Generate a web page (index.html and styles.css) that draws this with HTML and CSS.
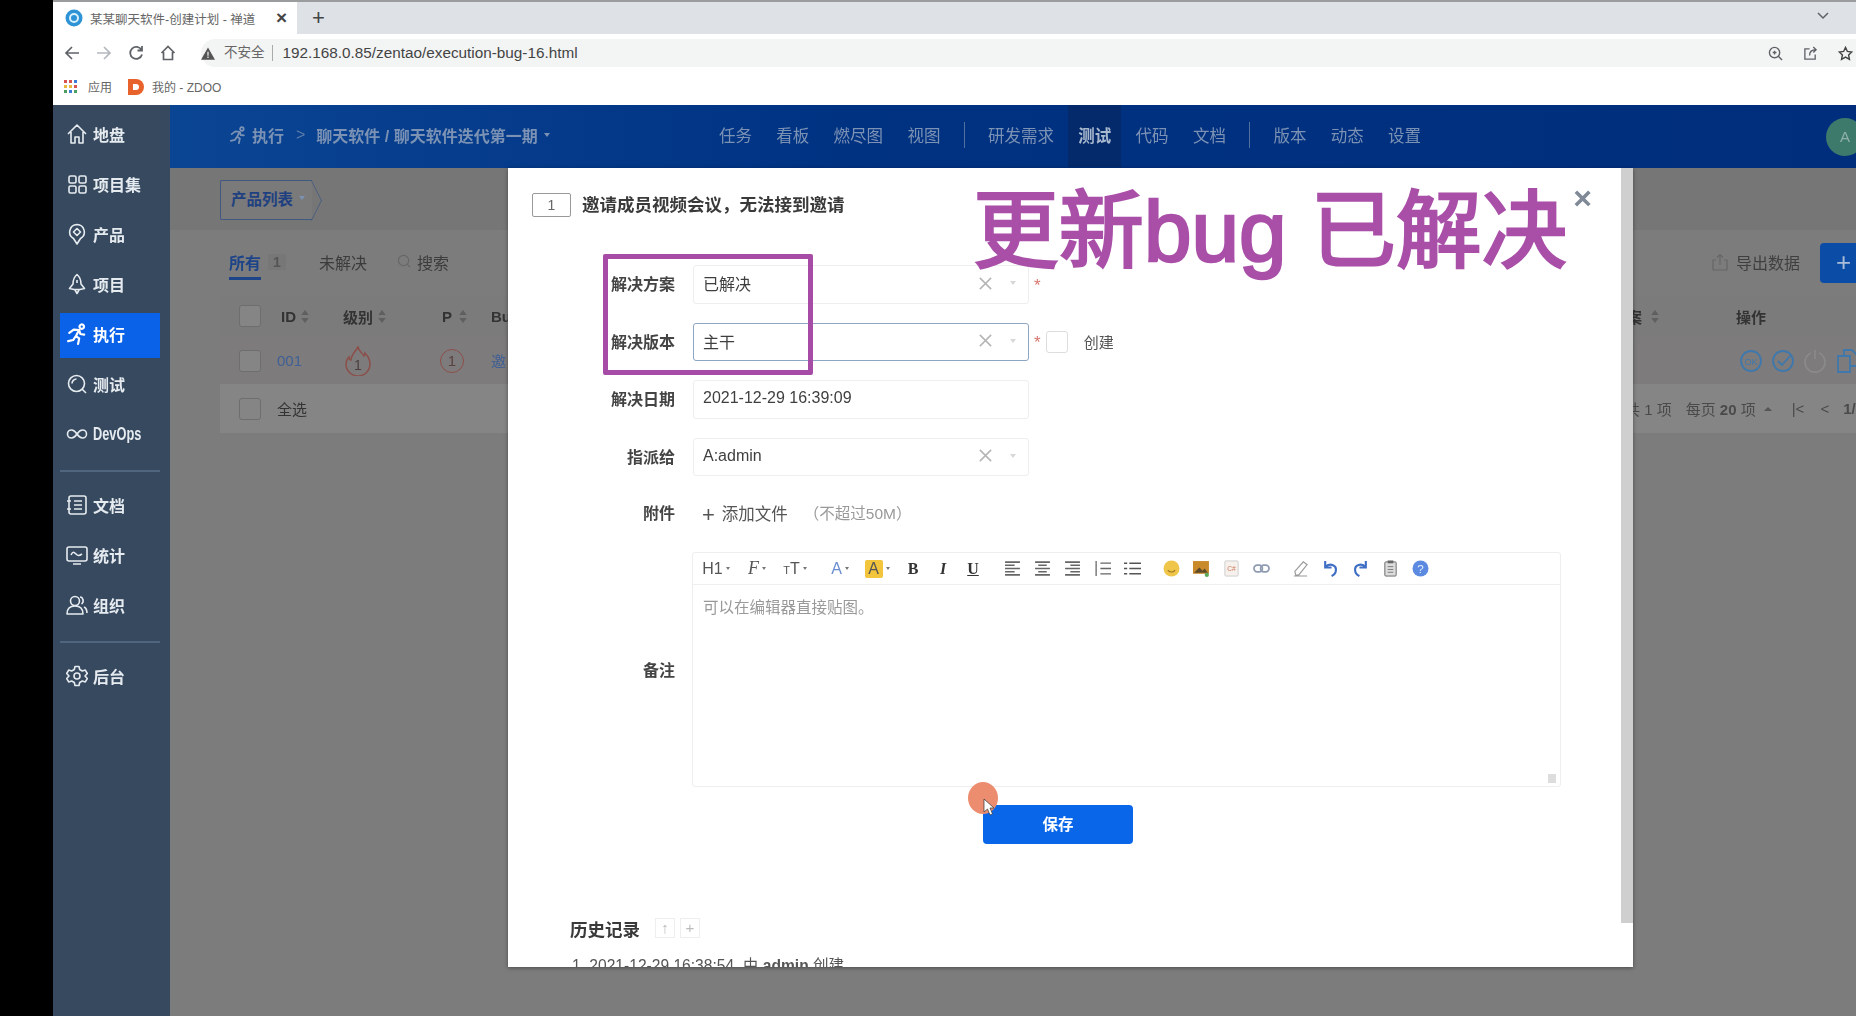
FILE: index.html
```html
<!DOCTYPE html>
<html lang="zh-CN">

<head>
    <meta charset="UTF-8">
    <title>某某聊天软件-创建计划 - 禅道</title>
    <link rel="stylesheet" href="styles.css">
</head>

<body>
    <svg class="defs" width="0" height="0">
        <symbol id="sort" viewBox="0 0 10 16"><path d="M5 1l4 5.500H1zM5 15l4-5.500H1z" fill="currentColor"/></symbol>
        <symbol id="clear" viewBox="0 0 16 16"><path d="M2 2l12 12M14 2L2 14" stroke="currentColor" stroke-width="1.600" fill="none"/></symbol>
        <symbol id="run" viewBox="0 0 20 20"><path d="M12.500 2.500a2 2 0 1 1 3 2.400 2 2 0 0 1-3-2.400zM3 9l4-3 5 .5 1 3.500 3.500 .5M11 8l-2 4 3 2-1 5M8.500 12.500L6.500 15.500 2 16.500" stroke="currentColor" stroke-width="2" fill="none" stroke-linecap="round" stroke-linejoin="round"/></symbol>
    </svg>

    <div class="desktop">
        <div class="browser">
            <div class="tabstrip">
                <div class="tab">
                    <svg class="favicon" viewBox="0 0 18 18"><circle cx="9" cy="9" r="8.500" fill="#2d93d6"/><circle cx="9" cy="9" r="4" fill="none" stroke="#d8f0fb" stroke-width="2"/></svg>
                    <span class="tab-title">某某聊天软件-创建计划 - 禅道</span>
                    <span class="tab-close">×</span>
                </div>
                <span class="tab-new">+</span>
                <svg class="tab-list" viewBox="0 0 12 8"><path d="M1 1l5 5 5-5" stroke="#5f6368" stroke-width="1.500" fill="none"/></svg>
            </div>

            <div class="addressbar">
                <svg class="tool" viewBox="0 0 16 16"><path d="M15 8H2M8 2L2 8l6 6" stroke="#5f6368" stroke-width="1.700" fill="none"/></svg>
                <svg class="tool" viewBox="0 0 16 16"><path d="M1 8h13M8 2l6 6-6 6" stroke="#b4b8bd" stroke-width="1.700" fill="none"/></svg>
                <svg class="tool" viewBox="0 0 16 16"><path d="M13.500 5A6 6 0 1 0 14 9.500M14 1v4.500H9.500" stroke="#5f6368" stroke-width="1.800" fill="none"/></svg>
                <svg class="tool" viewBox="0 0 16 16"><path d="M1.500 8L8 1.500 14.500 8M3.500 7v7.500h9V7" stroke="#5f6368" stroke-width="1.700" fill="none"/></svg>
                <div class="omnibox">
                    <svg class="warn" viewBox="0 0 16 14"><path d="M8 0l8 14H0z" fill="#555"/><path d="M8 5v4.500M8 10.500v1.500" stroke="#f1f3f4" stroke-width="1.400"/></svg>
                    <span class="unsafe">不安全</span>
                    <span class="url">192.168.0.85/zentao/execution-bug-16.html</span>
                    <svg class="omni-icon omni-zoom" viewBox="0 0 16 16"><circle cx="7" cy="7" r="5.500" fill="none" stroke="#5f6368" stroke-width="1.500"/><path d="M11 11l4 4M5 7h4M7 5v4" stroke="#5f6368" stroke-width="1.500"/></svg>
                    <svg class="omni-icon" viewBox="0 0 16 16"><path d="M7 3H2v11h11V9M7 10c0-4 3-6 7-6M11 1l3 3-3 3" stroke="#5f6368" stroke-width="1.400" fill="none"/></svg>
                    <svg class="omni-icon" viewBox="0 0 16 16"><path d="M8 1.500l2 4.300 4.700 .6-3.400 3.200 .9 4.600L8 11.900l-4.200 2.300 .9-4.600L1.300 6.400 6 5.800z" stroke="#444" stroke-width="1.500" fill="none"/></svg>
                </div>
            </div>

            <div class="bookmarks">
                <svg class="apps" viewBox="0 0 14 14">
                    <g fill="#d9534f"><rect width="3" height="3"/><rect x="5" width="3" height="3"/></g>
                    <rect x="10" width="3" height="3" fill="#3d7bd9"/>
                    <g fill="#e8b93c"><rect y="5" width="3" height="3"/><rect x="5" y="5" width="3" height="3"/></g>
                    <rect x="10" y="5" width="3" height="3" fill="#d9534f"/>
                    <g fill="#4b9e5f"><rect y="10" width="3" height="3"/><rect x="10" y="10" width="3" height="3"/></g>
                    <rect x="5" y="10" width="3" height="3" fill="#3d7bd9"/>
                </svg>
                <span>应用</span>
                <svg class="zdoo" viewBox="0 0 16 16"><path d="M0 0h8a8 8 0 0 1 0 16H0z" fill="#e8622c"/><path d="M5 5h3a3 3 0 0 1 0 6H5z" fill="#fff"/></svg>
                <span>我的 - ZDOO</span>
            </div>

            <div class="zentao">
                <nav class="sidebar">
                    <a class="side-item">
                        <svg viewBox="0 0 22 22"><path d="M2 11L11 2l9 9M5 9v11h4v-6h4v6h4V9"/></svg>地盘
                    </a>
                    <a class="side-item">
                        <svg viewBox="0 0 22 22"><rect x="3" y="3" width="7" height="7" rx="1.500"/><rect x="13" y="3" width="7" height="7" rx="1.500"/><rect x="3" y="13" width="7" height="7" rx="1.500"/><rect x="13" y="13" width="7" height="7" rx="1.500"/></svg>项目集
                    </a>
                    <a class="side-item">
                        <svg viewBox="0 0 22 22"><path d="M11 1.500a7.500 7.500 0 0 0-3.500 14L11 21l3.500-5.500a7.500 7.500 0 0 0-3.500-14zM11 5.500l3.500 3.500-3.500 3.500L7.500 9z"/></svg>产品
                    </a>
                    <a class="side-item">
                        <svg viewBox="0 0 22 22"><path d="M11 1.500c3 2.500 4 6 4 9.500l3.500 4.500-4.500 1H8l-4.500-1L7 11c0-3.500 1-7 4-9.500zM9 17l2 3.500 2-3.500M11 7v3"/></svg>项目
                    </a>
                    <a class="side-item active">
                        <svg viewBox="0 0 20 20"><use href="#run"/></svg>执行
                    </a>
                    <a class="side-item">
                        <svg viewBox="0 0 22 22"><circle cx="10.500" cy="10.500" r="8"/><path d="M16 16l4 4M6 10.500a4.500 4.500 0 0 1 4.500-4.500"/></svg>测试
                    </a>
                    <a class="side-item">
                        <svg viewBox="0 0 22 22"><path d="M11 11c-2-3-3.500-4-5.500-4a4 4 0 0 0 0 8c2 0 3.500-1 5.500-4s3.500-4 5.500-4a4 4 0 0 1 0 8c-2 0-3.500-1-5.500-4z"/></svg><span class="side-narrow">DevOps</span>
                    </a>
                    <div class="side-line"></div>
                    <a class="side-item">
                        <svg viewBox="0 0 22 22"><rect x="3" y="2" width="17" height="18" rx="2"/><path d="M8 7h8M8 11h8M8 15h8M1 7h4M1 15h4"/></svg>文档
                    </a>
                    <a class="side-item">
                        <svg viewBox="0 0 22 22"><rect x="1" y="3" width="20" height="14" rx="2"/><path d="M7 20h8M5 11c2-4 3-3 5-1s3 2 6 0"/></svg>统计
                    </a>
                    <a class="side-item">
                        <svg viewBox="0 0 22 22"><circle cx="9" cy="7" r="4.500"/><path d="M1 20c0-5 3-8 8-8s8 3 8 8zM14 3c3 0 4.500 5 1.500 7M18 13c2 1 3 3 3 6"/></svg>组织
                    </a>
                    <div class="side-line"></div>
                    <a class="side-item">
                        <svg viewBox="0 0 22 22"><circle cx="11" cy="11" r="3"/><path d="M9 1.500h4l.7 3 2.600 1.500 3-.9 2 3.400-2.300 2.500 2.300 2.500-2 3.400-3-.9-2.600 1.500-.7 3H9l-.7-3-2.600-1.500-3 .9-2-3.400L3 11 .7 8.500l2-3.400 3 .9 2.600-1.500z"/></svg>后台
                    </a>
                </nav>

                <div class="main">
                    <header class="topnav">
                        <div class="crumbs">
                            <svg class="crumb-icon" viewBox="0 0 20 20"><use href="#run"/></svg>
                            <span>执行</span>
                            <span class="crumb-sep">&gt;</span>
                            <span>聊天软件 / 聊天软件迭代第一期</span>
                            <span class="caret-sm"></span>
                        </div>
                        <div class="menu">
                            <span>任务</span><span>看板</span><span>燃尽图</span><span>视图</span>
                            <i class="menu-sep"></i>
                            <span>研发需求</span><span class="current">测试</span><span>代码</span><span>文档</span>
                            <i class="menu-sep"></i>
                            <span>版本</span><span>动态</span><span>设置</span>
                        </div>
                        <div class="avatar">A</div>
                    </header>

                    <div class="crumbbar">
                        <div class="product-btn">产品列表<span class="caret-sm"></span></div>
                    </div>

                    <div class="page">
                        <div class="page-tabs">
                            <span class="tab-on">所有</span>
                            <span class="count">1</span>
                            <span class="tab-off">未解决</span>
                            <span class="tab-search">
                                <svg viewBox="0 0 16 16"><circle cx="7" cy="7" r="5.500" fill="none" stroke="#666" stroke-width="1.200"/><path d="M11 11l3 3" stroke="#666" stroke-width="1.200"/></svg>搜索
                            </span>
                            <span class="export">
                                <svg viewBox="0 0 18 18"><path d="M5 7H2v10h14V7h-3M9 12V2M6 4.500L9 1.500l3 3" fill="none" stroke="#666" stroke-width="1.200"/></svg>导出数据
                            </span>
                            <span class="add-btn">+</span>
                        </div>

                        <div class="table">
                            <div class="t-row t-head">
                                <span class="check"></span>
                                <span class="col-id">ID<svg class="sort"><use href="#sort"/></svg></span>
                                <span class="col-level">级别<svg class="sort"><use href="#sort"/></svg></span>
                                <span class="col-p">P<svg class="sort"><use href="#sort"/></svg></span>
                                <span class="col-title">Bug</span>
                                <span class="col-plan">案<svg class="sort"><use href="#sort"/></svg></span>
                                <span class="col-act">操作</span>
                            </div>
                            <div class="t-row t-body">
                                <span class="check"></span>
                                <span class="col-id bug-id"><span class="id-num">001</span></span>
                                <span class="col-level">
                                    <svg class="flame" viewBox="0 0 26 30"><path d="M13 1c1 5 4 5 6 9 1-1 1-2 1-3 3 3 5 7 5 11a12 12 0 0 1-24 0c0-3 1-5 3-7 0 2 1 3 2 3 0-5 4-8 7-13z" fill="none" stroke="#8c4f4a" stroke-width="1.500"/><text x="13" y="24" text-anchor="middle" font-size="14" fill="#4a3f3e">1</text></svg>
                                </span>
                                <span class="col-p"><span class="pri">1</span></span>
                                <span class="col-title bug-id">邀</span>
                                <span class="row-actions">
                                    <svg viewBox="0 0 24 24"><circle cx="12" cy="12" r="10" stroke="#3f78ac"/><text x="12" y="15.500" text-anchor="middle" font-size="9" fill="#3f78ac">OK</text></svg>
                                    <svg viewBox="0 0 24 24"><circle cx="12" cy="12" r="10" stroke="#3f78ac"/><path d="M7 12l4 4 9-10" stroke="#3f78ac"/></svg>
                                    <svg viewBox="0 0 24 24"><path d="M8 4a10 10 0 1 0 8 0M12 1v9" stroke="#8a8a8a"/></svg>
                                    <svg viewBox="0 0 24 24"><path d="M3 7h12v16H3zM9 7V1h8l5 5v11h-7" stroke="#3f78ac"/></svg>
                                </span>
                            </div>
                            <div class="t-row t-foot">
                                <span class="check"></span>
                                <span class="select-all">全选</span>
                                <span class="pager">
                                    <span class="total">共 1 项</span>
                                    <span>每页 <b>20</b> 项</span>
                                    <span class="caret-up"></span>
                                    <span class="pg-btn">|&lt;</span>
                                    <span class="pg-btn">&lt;</span>
                                    <b>1/1</b>
                                </span>
                            </div>
                        </div>
                    </div>
                </div>

                <div class="modal">
                    <div class="modal-head">
                        <span class="bug-no">1</span>
                        <strong>邀请成员视频会议，无法接到邀请</strong>
                        <span class="modal-close">×</span>
                    </div>

                    <div class="form">
                        <div class="form-row">
                            <label>解决方案</label>
                            <div class="field"><span>已解决</span><svg class="clear"><use href="#clear"/></svg><span class="caret-sm"></span></div>
                            <span class="star">*</span>
                        </div>
                        <div class="form-row">
                            <label>解决版本</label>
                            <div class="field focus"><span>主干</span><svg class="clear"><use href="#clear"/></svg><span class="caret-sm"></span></div>
                            <span class="star">*</span>
                            <span class="box"></span>
                            <span class="create">创建</span>
                        </div>
                        <div class="form-row">
                            <label>解决日期</label>
                            <div class="field"><span>2021-12-29 16:39:09</span></div>
                        </div>
                        <div class="form-row">
                            <label>指派给</label>
                            <div class="field"><span>A:admin</span><svg class="clear"><use href="#clear"/></svg><span class="caret-sm"></span></div>
                        </div>
                        <div class="form-row files">
                            <label>附件</label>
                            <span class="add-file"><i>+</i>添加文件</span>
                            <span class="limit">（不超过50M）</span>
                        </div>
                        <div class="form-row note-row">
                            <label>备注</label>
                            <div class="editor">
                                <div class="toolbar">
                                    <span class="tb w42">H1<i></i></span>
                                    <span class="tb w40 script">F<i></i></span>
                                    <span class="tb w36"><small>T</small>T<i></i></span>
                                    <span class="tb w36 sp blue">A<i></i></span>
                                    <span class="tb w38"><em class="mark">A</em><i></i></span>
                                    <span class="tb sm"><b class="serif">B</b></span>
                                    <span class="tb"><b class="serif it">I</b></span>
                                    <span class="tb"><b class="serif un">U</b></span>
                                    <span class="tb sp"><svg viewBox="0 0 16 14"><path d="M1 1h14M1 4h9M1 7h14M1 10h9M1 13h14" stroke="#666" stroke-width="1.500"/></svg></span>
                                    <span class="tb"><svg viewBox="0 0 16 14"><path d="M1 1h14M4 4h8M1 7h14M4 10h8M1 13h14" stroke="#666" stroke-width="1.500"/></svg></span>
                                    <span class="tb"><svg viewBox="0 0 16 14"><path d="M1 1h14M6 4h9M1 7h14M6 10h9M1 13h14" stroke="#666" stroke-width="1.500"/></svg></span>
                                    <span class="tb"><svg viewBox="0 0 16 14"><path d="M6 2h10M6 7h10M6 12h10M2 0v14" stroke="#666" stroke-width="1.200"/></svg></span>
                                    <span class="tb"><svg viewBox="0 0 16 14"><path d="M5 2h11M5 7h11M5 12h11M0 2h3M0 7h3M0 12h3" stroke="#555" stroke-width="1.500"/></svg></span>
                                    <span class="tb sp"><svg viewBox="0 0 16 16"><circle cx="8" cy="8" r="7.500" fill="#f0c64a"/><path d="M4.500 9.500c2 2.500 5 2.500 7 0" stroke="#a07a20" fill="none"/></svg></span>
                                    <span class="tb"><svg viewBox="0 0 16 16"><rect y="1" width="15" height="12" fill="#c98a2c"/><path d="M1 12l5-5 3 3 2-2 3 4z" fill="#5c4a2a"/><circle cx="13" cy="14" r="2" fill="#5aa85a"/></svg></span>
                                    <span class="tb"><svg viewBox="0 0 16 18"><rect x="1" y="1" width="14" height="16" rx="1" fill="#f6f1ec" stroke="#ccc"/><text x="8" y="12" text-anchor="middle" font-size="7" fill="#d07a60">C#</text></svg></span>
                                    <span class="tb"><svg viewBox="0 0 18 10"><rect x="1" y="1.500" width="9" height="7" rx="3.500" fill="none" stroke="#8f9bb0" stroke-width="1.800"/><rect x="8" y="1.500" width="9" height="7" rx="3.500" fill="none" stroke="#8f9bb0" stroke-width="1.800"/></svg></span>
                                    <span class="tb sp"><svg viewBox="0 0 18 18"><path d="M3 12l9-10 4 3-9 11H4zM2 17h14" fill="none" stroke="#999" stroke-width="1.200"/></svg></span>
                                    <span class="tb"><svg viewBox="0 0 14 16"><path d="M2 1v6h6M2 7c4-5 11-2 10 3 0 2-2 4-4 5" fill="none" stroke="#3f6fc4" stroke-width="2"/></svg></span>
                                    <span class="tb"><svg viewBox="0 0 14 16"><path d="M12 1v6H6M12 7C8 2 1 5 2 10c0 2 2 4 4 5" fill="none" stroke="#3f6fc4" stroke-width="2"/></svg></span>
                                    <span class="tb"><svg viewBox="0 0 14 18"><rect x="1" y="2" width="12" height="15" rx="1" fill="#ddd" stroke="#666"/><rect x="4" y="0.500" width="6" height="3" fill="#666"/><path d="M4 7h6M4 10h6M4 13h6" stroke="#777"/></svg></span>
                                    <span class="tb"><svg viewBox="0 0 16 16"><circle cx="8" cy="8" r="7.500" fill="#5c8ae0"/><text x="8" y="12" text-anchor="middle" font-size="11" fill="#e6eefc">?</text></svg></span>
                                </div>
                                <div class="editor-body">
                                    可以在编辑器直接贴图。
                                    <span class="resize"></span>
                                </div>
                            </div>
                        </div>
                    </div>

                    <div class="save-row"><button class="save">保存</button></div>

                    <div class="history">
                        <div class="history-title">
                            <strong>历史记录</strong>
                            <span class="hist-btn">↑</span>
                            <span class="hist-btn">+</span>
                        </div>
                        <p>1. 2021-12-29 16:38:54, 由 <b>admin</b> 创建。</p>
                    </div>

                    <div class="modal-thumb"></div>
                </div>
            </div>
        </div>

        <div class="note-box"></div>
        <div class="note-text">更新bug 已解决</div>
        <div class="click-dot"></div>
        <svg class="pointer" viewBox="0 0 12 18"><path d="M1 1v13l3.500-3 2.500 6 2.500-1-2.500-6H11z" fill="#fff" stroke="#333" stroke-width=".7"/></svg>
    </div>
</body>

</html>
```

FILE: styles.css
```css
* {
    box-sizing: border-box;
}

body {
    margin: 0;
    background-color: #000;
    font-family: "Liberation Sans", "Noto Sans CJK SC", sans-serif;
    font-size: 16px;
    color: #333;
    overflow: hidden;
}

.defs {
    position: absolute;
}

.desktop {
    position: relative;
    height: 1016px;
    padding-left: 53px;
    overflow: hidden;
}

.browser {
    display: flex;
    flex-direction: column;
    height: 100%;
    filter: blur(0.7px);
}

/* browser chrome */
.tabstrip {
    display: flex;
    align-items: flex-end;
    flex: none;
    height: 34px;
    background-color: #dee1e6;
    border-top: 2px solid #9a9c9e;
}

.tab {
    display: flex;
    align-items: center;
    width: 244px;
    height: 32px;
    padding: 0 10px 0 12px;
    background-color: #fff;
    font-size: 12.500px;
    color: #666;
}

.favicon {
    width: 18px;
    height: 18px;
    margin-right: 7px;
}

.tab-title {
    flex: 1;
    white-space: nowrap;
}

.tab-close {
    font-size: 19px;
    font-weight: bold;
    color: #444;
}

.tab-new {
    align-self: center;
    margin-left: 15px;
    font-size: 22px;
    color: #444;
}

.tab-list {
    align-self: center;
    width: 12px;
    height: 8px;
    margin: 0 27px 4px auto;
}

.addressbar {
    display: flex;
    align-items: center;
    flex: none;
    height: 38px;
    padding-left: 11px;
    background-color: #fff;
}

.tool {
    width: 16px;
    height: 16px;
    margin-right: 16px;
}

.omnibox {
    display: flex;
    align-items: center;
    flex: 1;
    height: 28px;
    margin-left: 9px;
    padding-left: 7px;
    background-color: #f3f4f4;
    border-radius: 14px 0 0 14px;
    font-size: 14px;
    color: #666;
}

.warn {
    flex: none;
    width: 14px;
    height: 13px;
    margin: 0 9px 0 -7px;
}

.unsafe {
    padding: 0 7px 0 0;
    border-right: 1px solid #aaa;
    font-size: 13.500px;
    line-height: 16px;
}

.url {
    margin-left: 10px;
    font-size: 15.300px;
    color: #444;
}

.omni-icon {
    width: 15px;
    height: 15px;
    margin-right: 3px;
    margin-left: 17px;
}

.omni-zoom {
    margin-left: auto;
}

.bookmarks {
    display: flex;
    align-items: center;
    flex: none;
    height: 33px;
    padding: 0 0 4px 11px;
    background-color: #fff;
    font-size: 12px;
    color: #666;
}

.apps {
    width: 14px;
    height: 14px;
    margin-right: 10px;
}

.zdoo {
    width: 16px;
    height: 16px;
    margin: 0 8px 0 16px;
}

/* zentao app */
.zentao {
    position: relative;
    display: flex;
    flex: 1;
    min-height: 0;
}

.sidebar {
    display: flex;
    flex-direction: column;
    flex: none;
    gap: 5px;
    width: 117px;
    padding: 8px 10px 0 7px;
    background-color: #36495f;
}

.side-item {
    display: flex;
    align-items: center;
    gap: 5px;
    height: 45px;
    padding: 0 0 3px 6px;
    font-weight: bold;
    font-size: 16px;
    color: #e6ebf0;
}

.side-item svg {
    flex: none;
    width: 22px;
    height: 22px;
    fill: none;
    stroke: #e6ebf0;
    stroke-width: 1.600;
    stroke-linejoin: round;
}

.side-item.active {
    background-color: #0a62e8;
    color: #fff;
}

.side-narrow {
    transform: scale(0.8, 1.1);
    transform-origin: left center;
}

.side-line {
    height: 2px;
    margin: 7px 0;
    background-color: #50657e;
}

.main {
    display: flex;
    flex-direction: column;
    flex: 1;
    min-width: 0;
    background-color: #7c7c7c;
}

.topnav {
    display: flex;
    align-items: center;
    flex: none;
    height: 63px;
    padding: 0 0 3px 59px;
    background: linear-gradient(90deg, #0a4593, #003282 40%, #002e7c);
    font-size: 16px;
    color: #7b92b4;
    overflow: hidden;
}

.crumbs {
    display: flex;
    align-items: center;
    flex: none;
    width: 490px;
    font-weight: bold;
}

.crumb-icon {
    width: 18px;
    height: 18px;
    margin-right: 5px;
    fill: none;
}

.crumb-sep {
    margin: 0 11px 0 12px;
    font-weight: normal;
    color: #5f7fab;
}

.caret-sm {
    width: 0;
    height: 0;
    margin-left: 6px;
    border-top: 4px solid #7b92b4;
    border-right: 3px solid transparent;
    border-left: 3px solid transparent;
}

.menu {
    display: flex;
    align-items: center;
    flex: none;
    gap: 24.300px;
    font-size: 16.500px;
    white-space: nowrap;
}

.menu .current {
    margin: 0 -10px;
    padding: 20px 10px;
    background-color: #052a6b;
    font-weight: bold;
    color: #a8b8ce;
}

.menu-sep {
    width: 1px;
    height: 26px;
    margin: 0 -1px;
    background-color: #50709f;
}

.avatar {
    flex: none;
    width: 38px;
    height: 38px;
    margin: 3px 0 0 405px;
    border-radius: 50%;
    background-color: #3d7a6c;
    font-size: 15px;
    line-height: 38px;
    text-align: center;
    color: #8fb0a8;
}

.crumbbar {
    flex: none;
    height: 62px;
    padding: 12px 0 0 50px;
    background-color: #767676;
}

.product-btn {
    display: flex;
    align-items: center;
    position: relative;
    width: 92px;
    height: 40px;
    padding: 0 0 4px 10px;
    background-color: #7a7a7a;
    border: 1px solid #3f5a80;
    border-right: 0;
    border-radius: 2px 0 0 2px;
    font-weight: bold;
    font-size: 15.500px;
    color: #1f4080;
}

.product-btn::after {
    content: "";
    position: absolute;
    top: 5px;
    right: -14px;
    width: 28px;
    height: 28px;
    border-top: 1px solid #3f5a80;
    border-right: 1px solid #3f5a80;
    transform: scaleX(0.5) rotate(45deg);
}

.page {
    flex: 1;
    min-height: 0;
    padding-left: 50px;
}

.page-tabs {
    display: flex;
    align-items: center;
    height: 65px;
    padding-bottom: 2px;
    font-size: 16px;
    color: #3c3c3c;
}

.tab-on {
    position: relative;
    margin-left: 9px;
    font-weight: bold;
    color: #1d4488;
}

.tab-on::after {
    content: "";
    position: absolute;
    left: 0;
    right: 0;
    bottom: -6px;
    height: 3px;
    background-color: #1d4488;
}

.count {
    width: 18px;
    margin-left: 7px;
    background-color: #777;
    font-weight: bold;
    font-size: 14px;
    text-align: center;
    color: #555;
}

.tab-off {
    margin-left: 33px;
}

.tab-search {
    display: flex;
    align-items: center;
    gap: 5px;
    margin-left: 30px;
}

.tab-search svg {
    width: 15px;
    height: 15px;
}

.export {
    display: flex;
    align-items: center;
    gap: 7px;
    margin-left: auto;
    color: #3f3f3f;
}

.export svg {
    width: 18px;
    height: 18px;
}

.add-btn {
    width: 36px;
    height: 40px;
    margin: 2px 0 0 20px;
    padding-left: 16px;
    background-color: #0b4ca6;
    border-radius: 4px 0 0 4px;
    font-size: 26px;
    line-height: 38px;
    color: #a9bcd8;
}

.table {
    background-color: #7f7f7f;
}

.t-row {
    display: flex;
    align-items: center;
    padding-left: 19px;
}

.t-head {
    height: 42px;
    background-color: #7b7b7b;
    font-weight: bold;
    font-size: 15px;
    color: #333;
}

.t-body {
    height: 47px;
    background-color: #7d7b7b;
    font-size: 15px;
}

.t-foot {
    height: 49px;
    background-color: #858585;
    font-size: 15px;
    color: #333;
}

.check {
    flex: none;
    width: 22px;
    height: 22px;
    background-color: #858585;
    border: 1px solid #6e6e6e;
    border-radius: 3px;
}

.col-id {
    display: flex;
    align-items: center;
    flex: none;
    width: 62px;
    margin-left: 20px;
    gap: 4px;
}

.id-num {
    margin-left: -4px;
}

.col-level {
    display: flex;
    align-items: center;
    flex: none;
    width: 99px;
    gap: 4px;
}

.col-p {
    display: flex;
    align-items: center;
    flex: none;
    width: 49px;
    gap: 6px;
}

.col-title {
    flex: none;
    color: #333;
}

.col-plan {
    display: flex;
    align-items: center;
    gap: 8px;
    margin-left: auto;
}

.col-act {
    width: 120px;
    margin-left: 76px;
}

.sort {
    width: 10px;
    height: 15px;
    color: #5f5f5f;
}

.bug-id {
    color: #3f5f96;
}

.flame {
    width: 26px;
    height: 30px;
    margin-left: 2px;
}

.pri {
    width: 24px;
    height: 24px;
    margin-left: -2px;
    border: 1.500px solid #8c4f4a;
    border-radius: 50%;
    font-size: 15px;
    line-height: 21px;
    text-align: center;
    color: #5a4240;
}

.row-actions {
    display: flex;
    gap: 8px;
    margin-left: auto;
    margin-right: -3px;
}

.row-actions svg {
    width: 24px;
    height: 24px;
    fill: none;
    stroke-width: 1.800;
}

.select-all {
    margin-left: 16px;
}

.pager {
    display: flex;
    align-items: center;
    gap: 14px;
    margin-left: auto;
    margin-right: -8px;
    white-space: nowrap;
    color: #4a4a4a;
}

.pg-btn {
    margin-left: 6px;
}

.pg-btn:last-of-type {
    margin-left: 2px;
}

.caret-up {
    width: 0;
    height: 0;
    margin-left: -6px;
    border-right: 4px solid transparent;
    border-bottom: 4px solid #555;
    border-left: 4px solid transparent;
}

/* bug dialog */
.modal {
    position: absolute;
    top: 63px;
    left: 455px;
    width: 1125px;
    height: 799px;
    padding-top: 25px;
    background-color: #fff;
    box-shadow: 0 1px 4px rgba(0, 0, 0, 0.4);
    overflow: hidden;
}

.modal-head {
    display: flex;
    align-items: center;
    gap: 11px;
    height: 24px;
    padding-left: 24px;
    font-size: 17.500px;
}

.modal-head strong {
    padding-bottom: 3px;
    font-weight: bold;
    color: #3a3a3a;
}

.bug-no {
    width: 39px;
    height: 24px;
    border: 1px solid #999;
    border-radius: 2px;
    font-size: 14px;
    line-height: 22px;
    text-align: center;
    color: #666;
}

.modal-close {
    margin: -14px 41px 0 auto;
    font-size: 32px;
    font-weight: bold;
    color: #7f8a96;
}

.form {
    display: flex;
    flex-direction: column;
    gap: 19px;
    margin-top: 48px;
}

.form-row {
    display: flex;
    align-items: center;
    height: 38.500px;
    font-size: 16px;
}

.form-row label {
    flex: none;
    width: 167px;
    margin-right: 18px;
    padding-bottom: 2px;
    font-weight: bold;
    font-size: 16px;
    text-align: right;
    color: #444;
}

.field {
    display: flex;
    align-items: center;
    flex: none;
    width: 336px;
    height: 100%;
    padding: 0 12px 2px 9px;
    border: 1px solid #eeeeee;
    border-radius: 3px;
    color: #3f3f3f;
}

.field span:first-child {
    flex: 1;
}

.field.focus {
    border-color: #8ea5c6;
}

.clear {
    width: 15px;
    height: 15px;
    margin-right: 18px;
    color: #b4b4b4;
}

.field .caret-sm {
    margin: 0 0 0 -1px;
    border-top-color: #d8d8d8;
}

.star {
    margin: 3px 0 0 5px;
    font-size: 17px;
    color: #d8766e;
}

.box {
    width: 22px;
    height: 22px;
    margin-left: 5px;
    border: 1px solid #ddd;
    border-radius: 3px;
}

.create {
    margin-left: 16px;
    font-size: 15px;
    color: #555;
}

.files {
    height: 36px;
}

.add-file {
    font-size: 16.500px;
    color: #555;
}

.add-file i {
    margin: 0 7px 0 9px;
    font-style: normal;
    font-size: 22px;
    line-height: 16px;
    vertical-align: -2px;
}

.limit {
    margin: -3px 0 0 16px;
    font-size: 15.500px;
    color: #999;
}

.note-row {
    height: 235px;
    margin-top: 2px;
}

.note-row label {
    margin-right: 17px;
}

.editor {
    width: 869px;
    height: 100%;
    border: 1px solid #eee;
    border-radius: 3px;
}

.toolbar {
    display: flex;
    align-items: center;
    height: 32px;
    padding-left: 2px;
    border-bottom: 1px solid #efefef;
    font-size: 16px;
    color: #555;
}

.tb {
    display: flex;
    align-items: center;
    justify-content: center;
    flex: none;
    width: 30px;
}

.tb svg {
    width: 17px;
    height: 17px;
}

.tb i {
    width: 0;
    height: 0;
    margin-left: 3px;
    border-top: 3px solid #777;
    border-right: 2.500px solid transparent;
    border-left: 2.500px solid transparent;
}

.tb small {
    margin-top: 3px;
    font-size: 11px;
}

.w42 { width: 42px; }
.w40 { width: 40px; }
.w38 { width: 38px; }
.w36 { width: 36px; }
.sp { margin-left: 9px; }
.sm { margin-left: 2px; }

.script {
    font-family: "Liberation Serif", serif;
    font-style: italic;
    font-size: 18px;
}

.blue {
    color: #6a8ed0;
}

.mark {
    width: 18px;
    background-color: #f3c53c;
    border-radius: 2px;
    font-style: normal;
    text-align: center;
}

.serif {
    font-family: "Liberation Serif", serif;
    font-size: 16px;
    color: #333;
}

.it { font-style: italic; }
.un { text-decoration: underline; }

.editor-body {
    position: relative;
    height: 201px;
    padding: 10px 10px;
    font-size: 15.500px;
    color: #999;
}

.resize {
    position: absolute;
    right: 4px;
    bottom: 3px;
    width: 8px;
    height: 9px;
    background-color: #ddd;
}

.save-row {
    margin-top: 18px;
    padding-left: 475px;
}

.save {
    width: 150px;
    height: 39px;
    padding: 0 0 3px;
    background-color: #0a66e8;
    border: 0;
    border-radius: 4px;
    font-family: inherit;
    font-weight: bold;
    font-size: 15.500px;
    color: #fff;
}

.history {
    padding: 70px 0 0 62px;
}

.history-title {
    display: flex;
    align-items: center;
    gap: 5px;
    height: 28px;
    font-size: 17.500px;
}

.history-title strong {
    margin-right: 10px;
    font-weight: bold;
    color: #3a3a3a;
}

.hist-btn {
    width: 20px;
    height: 20px;
    border: 1px solid #eee;
    font-size: 15px;
    line-height: 17px;
    text-align: center;
    color: #bbb;
}

.history p {
    margin: 11px 0 0 2px;
    font-size: 15.600px;
    color: #555;
}

.modal-thumb {
    position: absolute;
    top: 0;
    right: 0;
    width: 12px;
    height: 755px;
    background-color: #cfcfcf;
}

/* video annotations */
.note-box {
    position: absolute;
    top: 254px;
    left: 603px;
    width: 210px;
    height: 121px;
    border: 5px solid #a64ca6;
    border-radius: 2px;
}

.note-text {
    position: absolute;
    top: 172px;
    left: 973px;
    font-family: "Liberation Sans", "Noto Sans CJK SC", sans-serif;
    font-size: 85.500px;
    line-height: 120px;
    white-space: nowrap;
    color: #a94fa8;
    -webkit-text-stroke: 2.500px #a94fa8;
}

.click-dot {
    position: absolute;
    top: 782px;
    left: 968px;
    width: 30px;
    height: 32px;
    border-radius: 50%;
    background-color: #ec8d70;
}

.pointer {
    position: absolute;
    top: 798px;
    left: 983px;
    width: 12px;
    height: 18px;
}
```
